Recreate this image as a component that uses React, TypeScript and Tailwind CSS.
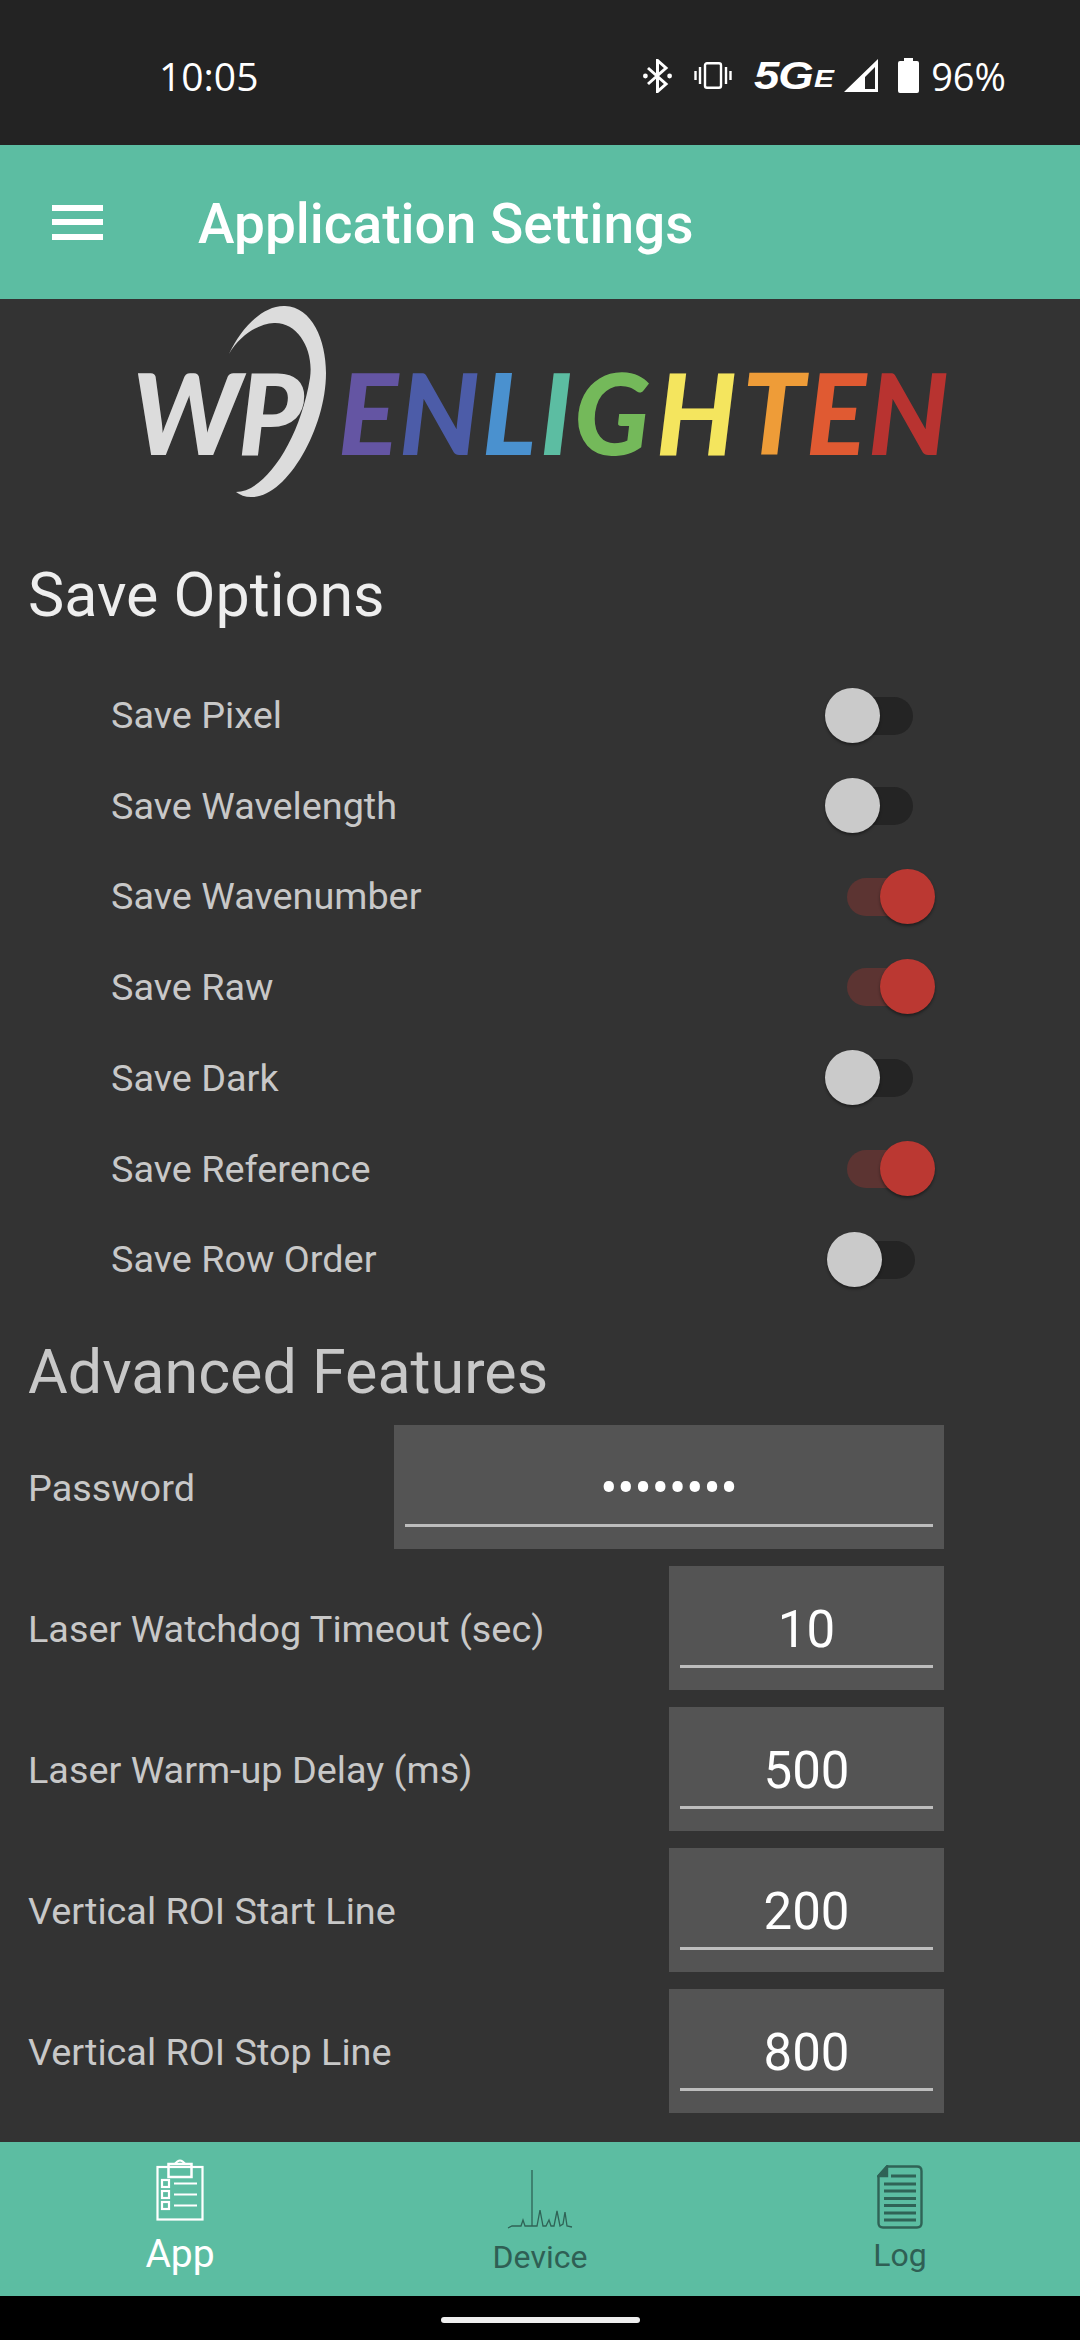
const font = "font-['Roboto',sans-serif]";

function Toggle({ on, shift = false }: { on: boolean; shift?: boolean }) {
  return (
    <div className={`relative h-[55px] w-[112px] ${shift ? 'ml-[2px]' : ''}`}>
      <div className={`absolute left-[22px] top-[9px] h-[38px] w-[66px] rounded-full ${on ? 'bg-[#5c3432]' : 'bg-[#242424]'}`} />
      <div className={`absolute top-0 h-[55px] w-[55px] rounded-full shadow-[0_2px_3px_rgba(0,0,0,0.4)] ${on ? 'left-[55px] bg-[#bb3832]' : 'left-0 bg-[#cacaca]'}`} />
    </div>
  );
}

function ToggleRow({ label, on, shift, h }: { label: string; on: boolean; shift?: boolean; h: string }) {
  return (
    <div className={`flex items-center justify-between pl-[111px] pr-[143px] ${h}`}>
      <span className="pt-[2px] text-[37.8px] leading-none text-[#c8c8c8]">{label}</span>
      <div className="w-[112px]"><Toggle on={on} shift={shift} /></div>
    </div>
  );
}

function Field({ label, value, wide }: { label: string; value: string; wide?: boolean }) {
  return (
    <div className="flex h-[124px] items-center justify-between pl-[28px] pr-[136px]">
      <span className="pt-[3px] text-[37.8px] leading-none text-[#c8c8c8]">{label}</span>
      <div className={`flex h-[124px] flex-col bg-[#545454] px-[11px] ${wide ? 'w-[550px]' : 'w-[275px]'}`}>
        <div className="flex h-[102px] items-center justify-center border-b-[3px] border-[#bdbdbd] pt-[27px] text-[51px] leading-none text-white">
          {wide ? '\u2022\u2022\u2022\u2022\u2022\u2022\u2022\u2022' : value}
        </div>
      </div>
    </div>
  );
}

function Logo() {
  const letters: [string, string][] = [
    ['E', 'w-[61px] text-[#6455a3]'], ['N', 'w-[83px] text-[#4c5ca8]'], ['L', 'w-[58px] text-[#4a91cf]'],
    ['I', 'w-[34px] text-[#5cbda2]'], ['G', 'w-[82px] text-[#74b95a]'], ['H', 'w-[86px] text-[#f4e55e]'],
    ['T', 'w-[64px] text-[#ee9c38]'], ['E', 'w-[62px] text-[#e05a32]'], ['N', 'w-[78px] text-[#b83330]'],
  ];
  return (
    <div className="relative h-[196px] w-full">
      <div className="absolute left-[132px] top-[57px] font-['Lato',sans-serif] text-[112px] font-black italic leading-[112px] tracking-[-3px] text-[#dcdcdc]">WP</div>
      <svg className="absolute left-[220px] top-0" width="120" height="200" viewBox="220 299 120 200">
        <path d="M229 354 C240 330 262 305 285 306 C312 307 326 340 326 373 C326 430 285 499 251 497 C245 497 240 495 236 492 C265 492 300 440 310 378 C314 350 298 322 274 323 C258 324 240 335 229 354 Z" fill="#dcdcdc" />
      </svg>
      <div className="absolute left-[338px] top-[57px] flex font-['Lato',sans-serif] text-[112px] font-black italic leading-[112px]">
        {letters.map(([c, cls], i) => (
          <span key={i} className={cls}>{c}</span>
        ))}
      </div>
    </div>
  );
}

export default function App() {
  return (
    <div className={`flex h-[2340px] w-[1080px] flex-col overflow-hidden bg-[#333333] ${font}`}>
      <div className="flex h-[145px] shrink-0 items-center justify-between bg-[#232323] pl-[159px] pr-[74px] pt-[6px] font-['Open_Sans',sans-serif] text-white">
        <span className="text-[39px] leading-none">10:05</span>
        <div className="flex items-center">
          <svg width="29" height="34" viewBox="0 0 29 34" className="mr-[22px]" fill="none" stroke="white" strokeWidth="3">
            <path d="M5 9 L23 25 L14.5 32.5 V1.5 L23 9 L5 25" />
            <circle cx="2.4" cy="17" r="2.4" fill="white" stroke="none" />
            <circle cx="26.6" cy="17" r="2.4" fill="white" stroke="none" />
          </svg>
          <svg width="38" height="27" viewBox="0 0 38 27" className="mr-[22px]" fill="none" stroke="white" strokeWidth="2.4">
            <rect x="11" y="1.2" width="16" height="24.6" rx="2" />
            <path d="M6 5 V22 M1.5 9 V18 M32 5 V22 M36.5 9 V18" />
          </svg>
          <span className="mr-[1px] w-[59px] origin-left scale-x-[1.2] font-['Liberation_Sans',sans-serif] text-[38px] font-bold italic leading-none tracking-[-1px]">5G</span>
          <span className="mr-[9px] mt-[8px] w-[21px] origin-left scale-x-[1.3] font-['Liberation_Sans',sans-serif] text-[23px] font-bold italic leading-none">E</span>
          <svg width="34" height="33" viewBox="0 0 34 33" className="mr-[20px]">
            <path d="M34 0 V33 H0 Z M31 8 L21 18 V30 H31 Z" fill="white" fillRule="evenodd" />
          </svg>
          <svg width="21" height="35" viewBox="0 0 21 35" className="mr-[12px]">
            <path d="M6 0 H15 V3 H19 Q21 3 21 5 V33 Q21 35 19 35 H2 Q0 35 0 33 V5 Q0 3 2 3 H6 Z" fill="white" />
          </svg>
          <span className="text-[38px] leading-none">96%</span>
        </div>
      </div>

      <div className="flex h-[154px] shrink-0 items-center bg-[#5cbda2] pl-[52px]">
        <div className="flex h-[35px] w-[51px] flex-col justify-between">
          <div className="h-[6px] bg-white" /><div className="h-[6px] bg-white" /><div className="h-[6px] bg-white" />
        </div>
        <span className="ml-[95px] mt-[4px] text-[55px] font-medium leading-none text-white">Application Settings</span>
      </div>

      <div className="flex min-h-0 flex-1 flex-col">
        <Logo />
        <div className="pl-[28px] pt-[66px] text-[61px] leading-[68px] text-[#eeeeee]">Save Options</div>
        <div className="mt-[41px] flex flex-col">
          <ToggleRow label="Save Pixel" on={false} h="h-[90px]" />
          <ToggleRow label="Save Wavelength" on={false} h="h-[91px]" />
          <ToggleRow label="Save Wavenumber" on h="h-[90px]" />
          <ToggleRow label="Save Raw" on h="h-[91px]" />
          <ToggleRow label="Save Dark" on={false} h="h-[91px]" />
          <ToggleRow label="Save Reference" on h="h-[91px]" />
          <ToggleRow label="Save Row Order" on={false} shift h="h-[90px]" />
        </div>
        <div className="pl-[28px] pt-[34px] text-[61px] leading-[68px] text-[#c8c8c8]">Advanced Features</div>
        <div className="mt-[19px] flex flex-col gap-[17px]">
          <Field label="Password" value="" wide />
          <Field label="Laser Watchdog Timeout (sec)" value="10" />
          <Field label="Laser Warm-up Delay (ms)" value="500" />
          <Field label="Vertical ROI Start Line" value="200" />
          <Field label="Vertical ROI Stop Line" value="800" />
        </div>
      </div>

      <div className="grid h-[154px] shrink-0 grid-cols-3 bg-[#5cbda2]">
        <div className="flex flex-col items-center pt-[17px] text-white">
          <svg width="48" height="62" viewBox="0 0 48 62" fill="none" stroke="white" strokeWidth="2.2">
            <rect x="1.5" y="8" width="45" height="52.5" />
            <rect x="12.5" y="5" width="23" height="13" strokeWidth="2.5" />
            <path d="M19 5 Q24 -2 29 5" />
            <rect x="6" y="21" width="7" height="7" /><rect x="6" y="32" width="7" height="7" /><rect x="6" y="43" width="7" height="7" />
            <path d="M18 24.5 H41 M18 35.5 H41 M18 46.5 H41" />
          </svg>
          <span className="mt-[14px] text-[39px] leading-none">App</span>
        </div>
        <div className="flex flex-col items-center pt-[27px] text-[#2f5f54]">
          <svg width="66" height="60" viewBox="0 0 66 60" fill="none" stroke="#2f6356" strokeWidth="1.3">
            <path d="M1 59 L5 57 H14 L16 51 L18 57 H25 V1 V57 H27 L30 57 L33 41 L36 57 L39 57 L42 51 L44 57 L47 57 L50 42 L53 57 L56 55 L58 43 L60 57 L65 58" />
          </svg>
          <span className="mt-[12px] text-[32px] leading-none">Device</span>
        </div>
        <div className="flex flex-col items-center pt-[23px] text-[#2f5f54]">
          <svg width="46" height="64" viewBox="0 0 46 64" fill="none" stroke="#2f6356" strokeWidth="2.4">
            <path d="M10 1.5 H40 Q44.5 1.5 44.5 6 V58 Q44.5 62.5 40 62.5 H6 Q1.5 62.5 1.5 58 V11 Z" />
            <path d="M1.5 11 L10 1.5 V11 Z" fill="#2f6356" />
            <path d="M14 11 H39 M7 19 H39 M7 26 H39 M7 33.5 H39 M7 40.5 H39 M7 48 H39 M7 55 H39" strokeWidth="3" />
          </svg>
          <span className="mt-[10px] text-[32px] leading-none">Log</span>
        </div>
      </div>

      <div className="flex h-[44px] shrink-0 items-start justify-center bg-black pt-[21px]">
        <div className="h-[6px] w-[199px] rounded-full bg-[#eeeeee]" />
      </div>
    </div>
  );
}
